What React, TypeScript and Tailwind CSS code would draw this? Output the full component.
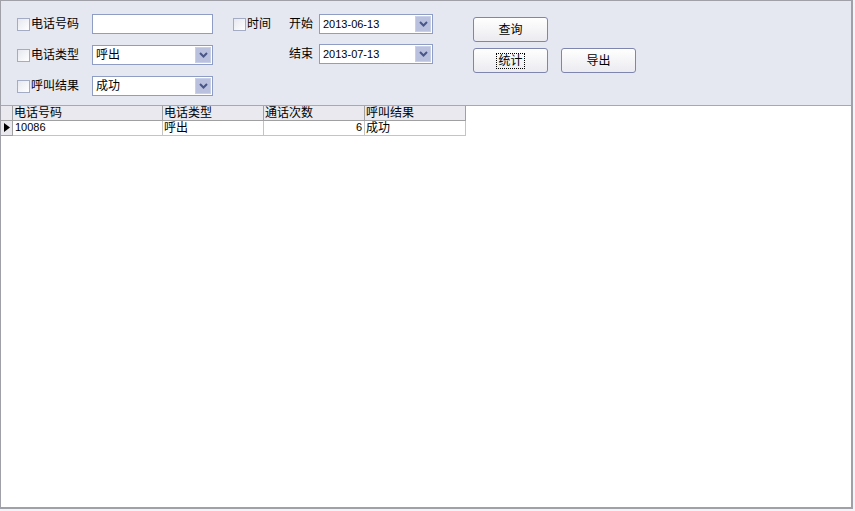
import React from "react";

const FONT = { fontFamily: '"Liberation Sans", "Noto Sans CJK SC", sans-serif' };

function CheckBox({ label }: { label: string }) {
  return (
    <div className="flex items-center h-[20px]">
      <span className="w-[13px] h-[13px] border border-[#a4abc4] bg-gradient-to-br from-[#e6e8ef] to-white" />
      <span className="ml-[1px] text-[12px] text-black leading-none">{label}</span>
    </div>
  );
}

function Arrow() {
  return (
    <span className="flex items-center justify-center w-[16px] h-[16px] bg-[#b9c1de] border border-[#c8cfe8]">
      <svg width="9" height="6" viewBox="0 0 9 6">
        <path d="M1 1 L4.5 4.5 L8 1" stroke="#4a5688" strokeWidth="2" fill="none" />
      </svg>
    </span>
  );
}

function Combo({ value, w, small }: { value: string; w: string; small?: boolean }) {
  return (
    <div className={`${w} h-[20px] flex items-center justify-between bg-white border border-[#8f9cc4] pl-[3px] pr-[1px]`}>
      <span className={small ? "text-[11px] leading-none" : "text-[12px] leading-none"}>{value}</span>
      <Arrow />
    </div>
  );
}

function Btn({ label, focus }: { label: string; focus?: boolean }) {
  return (
    <button className="w-[75px] h-[25px] rounded-[3px] border border-[#7e86b0] bg-gradient-to-b from-white to-[#ebebf0] flex items-center justify-center text-[12px] text-black">
      <span className={focus ? "outline outline-1 outline-dotted outline-black px-[1px] leading-[14px]" : "leading-[14px]"}>
        {label}
      </span>
    </button>
  );
}

const cols = [
  { key: "phone", header: "电话号码", w: "w-[150px]" },
  { key: "type", header: "电话类型", w: "w-[101px]" },
  { key: "count", header: "通话次数", w: "w-[101px]" },
  { key: "result", header: "呼叫结果", w: "w-[101px]" },
];

const rows = [{ phone: "10086", type: "呼出", count: "6", result: "成功" }];

export default function App() {
  return (
    <div style={FONT} className="w-[855px] h-[511px] bg-[#f4f4f6] overflow-hidden">
      <div className="w-[853px] h-[509px] flex flex-col border-l border-b-2 border-r-2 border-t border-[#a0a0a8] bg-white">
        {/* query panel */}
        <div className="h-[105px] shrink-0 bg-[#e6e8f1] border-b border-[#a6a9b4] flex pl-[16px]">
          <div className="flex flex-col gap-[11px] pt-[13px]">
            <div className="flex">
              <div className="w-[75px]"><CheckBox label="电话号码" /></div>
              <div className="w-[121px] h-[20px] bg-white border border-[#8f9cc4]" />
            </div>
            <div className="flex">
              <div className="w-[75px]"><CheckBox label="电话类型" /></div>
              <Combo value="呼出" w="w-[121px]" />
            </div>
            <div className="flex">
              <div className="w-[75px]"><CheckBox label="呼叫结果" /></div>
              <Combo value="成功" w="w-[121px]" />
            </div>
          </div>

          <div className="flex flex-col gap-[10px] pt-[13px] ml-[20px]">
            <div className="flex items-center">
              <div className="w-[56px]"><CheckBox label="时间" /></div>
              <span className="w-[30px] text-[12px]">开始</span>
              <Combo value="2013-06-13" w="w-[114px]" small />
            </div>
            <div className="flex items-center">
              <div className="w-[56px]" />
              <span className="w-[30px] text-[12px]">结束</span>
              <Combo value="2013-07-13" w="w-[114px]" small />
            </div>
          </div>

          <div className="flex flex-col gap-[6px] pt-[16px] ml-[40px]">
            <Btn label="查询" />
            <div className="flex gap-[13px]">
              <Btn label="统计" focus />
              <Btn label="导出" />
            </div>
          </div>
        </div>

        {/* result grid */}
        <div className="flex-1 bg-white">
          <table className="border-collapse text-[12px] leading-none table-fixed">
            <thead>
              <tr className="h-[14px] bg-[#e9e9ef]">
                <th className="w-[9px] border-r border-b border-[#a0a0a0] p-0" />
                {cols.map((c) => (
                  <th
                    key={c.key}
                    className={`${c.w} border-r border-b border-[#a0a0a0] px-[1px] py-0 text-left font-normal`}
                  >
                    {c.header}
                  </th>
                ))}
              </tr>
            </thead>
            <tbody>
              {rows.map((r) => (
                <tr key={r.phone} className="h-[15px]">
                  <td className="border-r border-b border-[#a0a0a0] bg-[#e9e9ef] p-0">
                    <svg width="10" height="11" viewBox="0 0 10 11" className="ml-[1px]">
                      <path d="M2 1 L8 5.5 L2 10 Z" fill="#000" />
                    </svg>
                  </td>
                  <td className="border-r border-b border-[#c4c4c4] px-[2px] py-0 text-[11px]">{r.phone}</td>
                  <td className="border-r border-b border-[#c4c4c4] px-[1px] py-0">{r.type}</td>
                  <td className="border-r border-b border-[#c4c4c4] px-[2px] py-0 text-right text-[11px]">{r.count}</td>
                  <td className="border-r border-b border-[#c4c4c4] px-[1px] py-0">{r.result}</td>
                </tr>
              ))}
            </tbody>
          </table>
        </div>
      </div>
    </div>
  );
}
